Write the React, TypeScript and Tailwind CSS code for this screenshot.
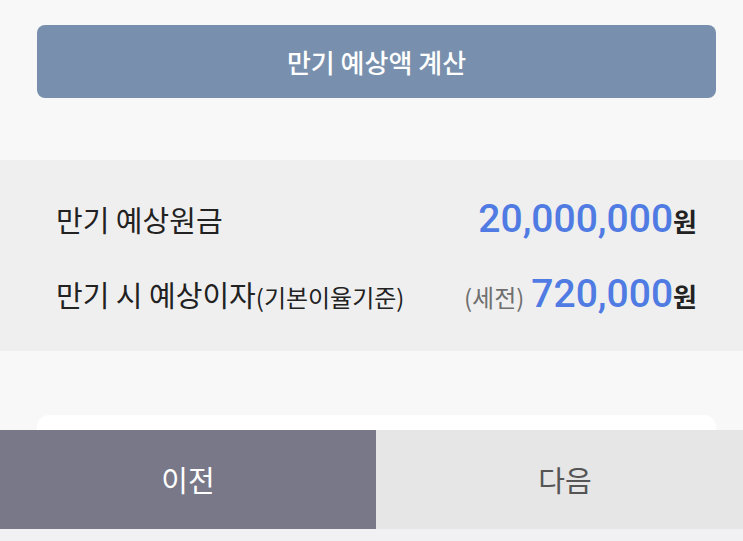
const kr = "font-['Noto_Sans_CJK_KR',sans-serif]";
const num = "font-['Roboto','Noto_Sans_CJK_KR',sans-serif]";

function Amount({ prefix, value }: { prefix?: string; value: string }) {
  return (
    <div className="flex items-baseline">
      {prefix && (
        <span className={`${kr} mr-[7px] text-[24px] leading-none text-[#707070]`}>
          {prefix}
        </span>
      )}
      <span className={`${num} text-[39px] font-medium leading-none text-[#4f7be3]`}>
        {value}
      </span>
      <span className={`${kr} text-[26px] font-bold leading-none text-[#222]`}>원</span>
    </div>
  );
}

export default function App() {
  return (
    <div className={`${kr} flex h-[541px] w-[743px] flex-col overflow-hidden bg-[#f8f8f8]`}>
      <div className="h-[160px] shrink-0 pl-[37px] pr-[27px] pt-[25px]">
        <button className="flex h-[73px] w-full items-center justify-center rounded-[8px] bg-[#7890ad] text-[26px] font-medium leading-none text-white">
          만기 예상액 계산
        </button>
      </div>

      <div className="flex h-[191px] shrink-0 flex-col gap-[31px] bg-[#efefef] pl-[56px] pr-[46px] pt-[37px]">
        <div className="flex h-[44px] items-center justify-between">
          <span className="text-[29px] leading-none text-[#222]">만기 예상원금</span>
          <Amount value="20,000,000" />
        </div>
        <div className="flex h-[44px] items-center justify-between">
          <span className="flex items-baseline leading-none text-[#222]">
            <span className="text-[29px]">만기 시 예상이자</span>
            <span className="text-[24px]">(기본이율기준)</span>
          </span>
          <Amount prefix="(세전)" value="720,000" />
        </div>
      </div>

      <div className="h-[79px] shrink-0 pl-[37px] pr-[27px] pt-[64px]">
        <div className="h-[15px] rounded-t-[12px] bg-white" />
      </div>

      <div className="flex h-[99px] shrink-0">
        <button className="flex w-[376px] items-center justify-center bg-[#787889] text-[29px] leading-none text-white">
          이전
        </button>
        <button className="flex flex-1 items-center justify-center bg-[#e6e6e6] pl-[11px] text-[29px] leading-none text-[#555]">
          다음
        </button>
      </div>
      <div className="flex-1 bg-[#f1f1f3]" />
    </div>
  );
}
